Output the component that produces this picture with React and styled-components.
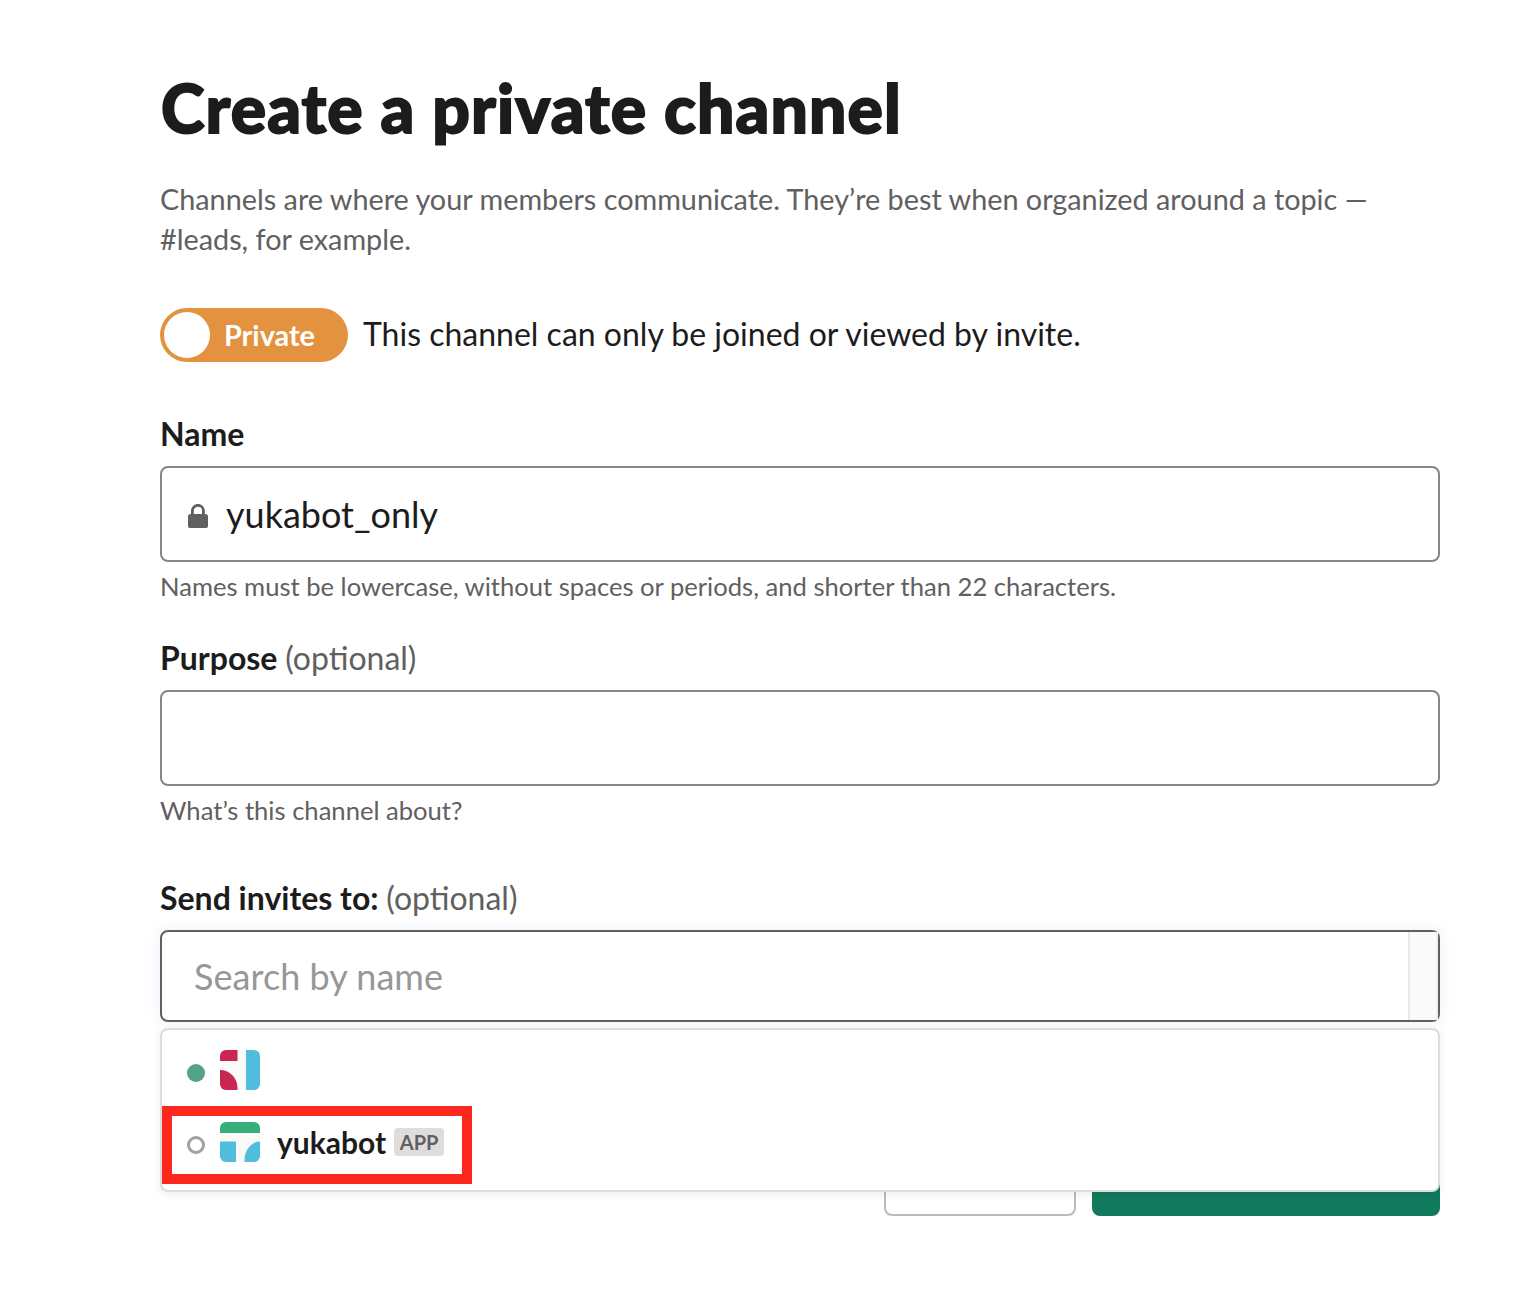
import React, { Component } from 'react';
import styled, { createGlobalStyle } from 'styled-components';

const members = [
  { id: 'member', online: true },
  { id: 'yukabot', name: 'yukabot', isApp: true, highlighted: true },
];

export default class App extends Component {

  state = {
    name: 'yukabot_only',
    purpose: '',
    search: '',
  }

  update = key => e => this.setState({ [key]: e.target.value });

  get results() {
    return members.map(item => (
      <Result key={item.id} highlighted={item.highlighted} item={item} />
    ));
  }

  render() {
    const { name, purpose, search } = this.state;

    return (
      <Page>
        <GlobalStyle />
        <Title>Create a private channel</Title>
        <Description>
          Channels are where your members communicate. They’re best when organized around a topic —<br />
          #leads, for example.
        </Description>

        <Privacy>
          <Toggle type="button">
            <Knob />
            Private
          </Toggle>
          <PrivacyText>This channel can only be joined or viewed by invite.</PrivacyText>
        </Privacy>

        <Field>
          <Label>Name</Label>
          <InputBox>
            <LockIcon />
            <Input value={name} onChange={this.update('name')} />
          </InputBox>
          <Hint>Names must be lowercase, without spaces or periods, and shorter than 22 characters.</Hint>
        </Field>

        <Field>
          <Label>Purpose <Optional>(optional)</Optional></Label>
          <InputBox>
            <Input value={purpose} onChange={this.update('purpose')} />
          </InputBox>
          <Hint>What’s this channel about?</Hint>
        </Field>

        <InviteField>
          <Label>Send invites to: <Optional>(optional)</Optional></Label>
          <SearchBox>
            <SearchInput
              placeholder="Search by name"
              value={search}
              onChange={this.update('search')}
            />
            <ScrollTrack />
          </SearchBox>
          <Dropdown>{this.results}</Dropdown>
        </InviteField>

        <Footer>
          <CancelButton type="button" />
          <CreateButton type="button" />
        </Footer>
      </Page>
    );
  }
}

const Result = ({ item, highlighted }) => (
  <ResultRow $highlighted={highlighted}>
    <Presence $online={item.online} />
    {item.isApp ? <AppAvatar /> : <MemberAvatar />}
    {item.name && <ResultName>{item.name}</ResultName>}
    {item.isApp && <Badge>APP</Badge>}
  </ResultRow>
);

const LockIcon = () => (
  <Lock viewBox="0 0 20 24">
    <path d="M4.4 11V6.8a5.5 5.5 0 0 1 11 0V11" fill="none" stroke="#616061" strokeWidth="2.8" />
    <rect y="10" width="20" height="14" rx="2.6" fill="#616061" />
  </Lock>
);

const MemberAvatar = () => (
  <Avatar viewBox="0 0 40 40">
    <rect width="40" height="40" fill="#f9f9f9" />
    <rect width="17.5" height="11" fill="#c92653" />
    <path d="M0 20A17.5 18 0 0 1 17.5 38V40H0Z" fill="#c92653" />
    <rect x="26" width="14" height="40" fill="#50bddd" />
  </Avatar>
);

const AppAvatar = () => (
  <Avatar viewBox="0 0 40 40">
    <rect width="40" height="40" fill="#f9f9f9" />
    <rect width="40" height="11" fill="#38ad7a" />
    <rect y="19.5" width="16" height="20.5" fill="#50bddd" />
    <path d="M40 19.5A15.5 18.5 0 0 0 24.5 38V40H40Z" fill="#50bddd" />
  </Avatar>
);

const GlobalStyle = createGlobalStyle`
  * {
    box-sizing: border-box;
  }

  body {
    margin: 0;
    background: #fff;
    color: #1d1c1d;
    font-family: Lato, "Liberation Sans", sans-serif;
  }

  button, input {
    font-family: inherit;
    color: inherit;
  }
`;

const Page = styled.main`
  display: flex;
  flex-direction: column;
  width: 1532px;
  height: 1316px;
  padding: 68px 92px 0 160px;
  overflow: hidden;
`;

const Title = styled.h1`
  margin: 0;
  padding-left: 1px;
  font-size: 66px;
  font-weight: 900;
  line-height: 80px;
  letter-spacing: 1.1px;
  white-space: nowrap;
  -webkit-text-stroke: 1.8px #1d1c1d;
`;

const Description = styled.p`
  margin: 31px 0 0;
  color: #616061;
  font-size: 28.8px;
  line-height: 40px;
  white-space: nowrap;
`;

const Privacy = styled.div`
  display: flex;
  align-items: center;
  gap: 15px;
  height: 54px;
  margin: 49px 0 50px;
`;

const Toggle = styled.button`
  display: flex;
  align-items: center;
  gap: 14px;
  width: 188px;
  height: 54px;
  padding: 0 4px;
  border: 0;
  border-radius: 27px;
  background: #e3933f;
  color: #fff;
  font-size: 28.8px;
  font-weight: 700;
`;

const Knob = styled.span`
  width: 46px;
  height: 46px;
  border-radius: 50%;
  background: #fff;
`;

const PrivacyText = styled.span`
  padding-bottom: 2px;
  font-size: 32px;
  line-height: 52px;
  white-space: nowrap;
`;

const Field = styled.div`
  height: 224px;
`;

const InviteField = styled.div`
  position: relative;
  height: 284px;
  margin-top: 16px;
`;

const Label = styled.div`
  height: 54px;
  font-size: 32px;
  font-weight: 700;
  line-height: 44px;
`;

const Optional = styled.span`
  color: #616061;
  font-weight: 400;
`;

const InputBox = styled.div`
  display: flex;
  align-items: center;
  gap: 18px;
  height: 96px;
  padding: 0 26px;
  border: 2px solid #868686;
  border-radius: 8px;
`;

const Input = styled.input`
  flex: 1;
  padding: 0;
  border: 0;
  outline: 0;
  background: none;
  font-size: 36px;
  line-height: 48px;
`;

const Lock = styled.svg`
  width: 20px;
  height: 24px;
  margin-top: 4px;
`;

const Hint = styled.div`
  padding-top: 6px;
  color: #616061;
  font-size: 25.6px;
  line-height: 36px;
`;

const SearchBox = styled.div`
  display: flex;
  height: 92px;
  border: 2px solid #616061;
  border-radius: 8px;
  box-shadow: 0 0 14px rgba(29, 100, 200, 0.1);
`;

const SearchInput = styled(Input)`
  padding-left: 32px;

  &::placeholder {
    color: #979797;
    letter-spacing: 0.05px;
    opacity: 1;
  }
`;

const ScrollTrack = styled.div`
  width: 30px;
  border-left: 2px solid #e8e8e8;
  border-right: 2px solid #f0f0f0;
  background: #fafafa;
`;

const Dropdown = styled.div`
  position: absolute;
  top: 152px;
  left: 0;
  right: 0;
  z-index: 1;
  height: 164px;
  padding: 2px 0 0;
  border: 2px solid #dddddd;
  border-radius: 8px;
  background: #fff;
  box-shadow: 0 2px 8px rgba(0, 0, 0, 0.08);
`;

const ResultRow = styled.div`
  display: flex;
  align-items: center;
  width: ${props => props.$highlighted ? '310px' : '100%'};
  height: ${props => props.$highlighted ? '78px' : '74px'};
  padding: ${props => props.$highlighted ? '0 0 6px 15px' : '2px 0 0 25px'};
  border: ${props => props.$highlighted ? '10px solid #fc281e' : '0'};
`;

const Presence = styled.span`
  flex: none;
  width: 18px;
  height: 18px;
  margin: 5px 15px 0 0;
  border: ${props => props.$online ? '0' : '3px solid #a0a0a0'};
  border-radius: 50%;
  background: ${props => props.$online ? '#53a28c' : 'transparent'};
`;

const Avatar = styled.svg`
  flex: none;
  width: 40px;
  height: 40px;
  border-radius: 6px;
`;

const ResultName = styled.span`
  margin-left: 17px;
  font-size: 30px;
  font-weight: 700;
  line-height: 40px;
`;

const Badge = styled.span`
  width: 50px;
  height: 28px;
  margin-left: 8px;
  border-radius: 4px;
  background: #dddddd;
  color: #616061;
  font-size: 20px;
  font-weight: 700;
  line-height: 28px;
  text-align: center;
`;

const Footer = styled.div`
  display: flex;
  justify-content: flex-end;
  gap: 16px;
  height: 56px;
`;

const CancelButton = styled.button`
  width: 192px;
  border: 2px solid #bbbbbb;
  border-radius: 8px;
  background: #fff;
`;

const CreateButton = styled.button`
  width: 348px;
  border: 0;
  border-radius: 8px;
  background: #127a5c;
`;
